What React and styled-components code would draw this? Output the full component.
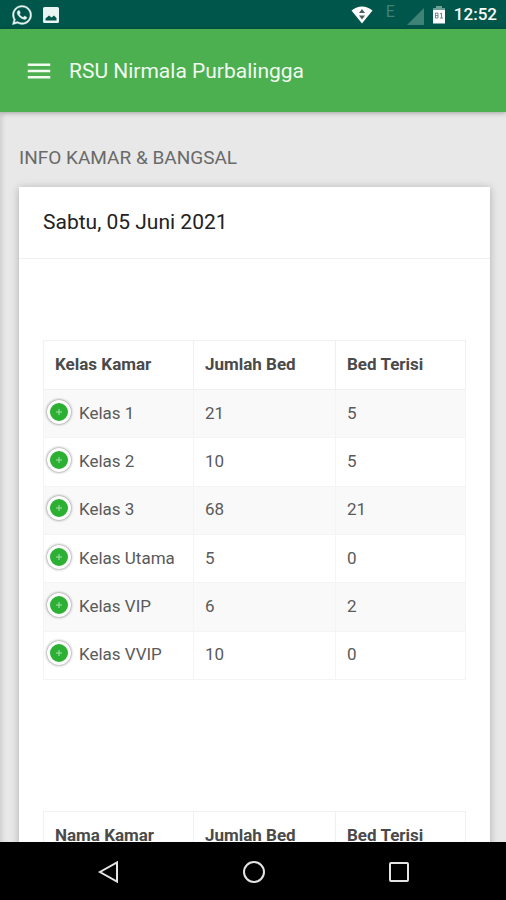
import React from "react";
import styled, { createGlobalStyle } from "styled-components";
import { FaWhatsapp } from "react-icons/fa";
import { MdMenu } from "react-icons/md";

const kelas = [
  { nama: "Kelas 1", jumlah: 21, terisi: 5 },
  { nama: "Kelas 2", jumlah: 10, terisi: 5 },
  { nama: "Kelas 3", jumlah: 68, terisi: 21 },
  { nama: "Kelas Utama", jumlah: 5, terisi: 0 },
  { nama: "Kelas VIP", jumlah: 6, terisi: 2 },
  { nama: "Kelas VVIP", jumlah: 10, terisi: 0 },
];

export default function App() {
  return (
    <Screen>
      <GlobalStyle />
      <StatusBar />
      <AppBar>
        <MenuButton type="button" aria-label="Menu"><MdMenu size={30} /></MenuButton>
        <Brand href="#">RSU Nirmala Purbalingga</Brand>
      </AppBar>
      <Content>
        <BlockTitle>INFO KAMAR &amp; BANGSAL</BlockTitle>
        <Card>
          <CardHeader>Sabtu, 05 Juni 2021</CardHeader>
          <CardBody>
            <BedTable title="Kelas Kamar" rows={kelas} />
            <BedTable title="Nama Kamar" rows={[]} />
          </CardBody>
        </Card>
      </Content>
      <NavBar />
    </Screen>
  );
}

const StatusBar = () => (
  <Status>
    <StatusGroup>
      <FaWhatsapp size={22} stroke="currentColor" strokeWidth={8} />
      <svg width="20" height="20" viewBox="0 0 20 20">
        <path
          fillRule="evenodd"
          d="M3.500 2H16.500Q18 2 18 3.500V16.500Q18 18 16.500 18H3.500Q2 18 2 16.500V3.500Q2 2 3.500 2ZM4.500 15.500H15.500V13L13 10.500L10.500 12.500L8 10.500L4.500 13.500Z"
          fill="currentColor"
        />
      </svg>
    </StatusGroup>
    <StatusGroup>
      <svg width="22" height="18" viewBox="0 0 22 18">
        <path d="M0.5 4.5Q11 -3.5 21.500 4.500L11 17.500Z" fill="#fff" />
        <path d="M8 7L11 3L14 7ZM8 9.500L11 13.500L14 9.500Z" fill="#4b5f5b" />
      </svg>
      <Network>E</Network>
      <Signal width="17" height="17" viewBox="0 0 17 17">
        <path d="M0 17L17 0V17Z" fill="#3f8377" />
      </Signal>
      <svg width="14" height="18" viewBox="0 0 14 18">
        <path d="M4 0H10V2H13V5H1V2H4Z" fill="#6b9f96" />
        <path d="M1 4H13V17.500H1Z" fill="#fff" />
        <path d="M3.500 7H6V12H3.500ZM3.500 9.500H6M8 8L9.500 7V12M8 12H11" fill="none" stroke="#6f8f89" />
      </svg>
      <Clock>12:52</Clock>
    </StatusGroup>
  </Status>
);

const BedTable = ({ title, rows }) => (
  <Table $filled={rows.length > 0}>
    <thead>
      <tr>
        <Th $width="150px">{title}</Th>
        <Th $width="142px">Jumlah Bed</Th>
        <Th>Bed Terisi</Th>
      </tr>
    </thead>
    <tbody>
      {rows.map((row) => (
        <Row key={row.nama}>
          <NameTd>
            <Name>
              <Expand type="button" aria-label={"Detail " + row.nama}>
                <svg width="6" height="6" viewBox="0 0 6 6">
                  <path d="M3 0V6M0 3H6" stroke="#a5e3a8" />
                </svg>
              </Expand>
              {row.nama}
            </Name>
          </NameTd>
          <Td>{row.jumlah}</Td>
          <Td>{row.terisi}</Td>
        </Row>
      ))}
    </tbody>
  </Table>
);

const NavBar = () => (
  <Nav>
    <NavButton type="button" aria-label="Back">
      <svg width="24" height="24" viewBox="0 0 24 24">
        <path d="M20 2.500V21.500L3 12Z" />
      </svg>
    </NavButton>
    <NavButton type="button" aria-label="Home">
      <svg width="24" height="24" viewBox="0 0 24 24">
        <circle cx="12" cy="12" r="10" />
      </svg>
    </NavButton>
    <NavButton type="button" aria-label="Recent">
      <svg width="24" height="24" viewBox="0 0 24 24">
        <rect x="3" y="3" width="18" height="18" rx="1" />
      </svg>
    </NavButton>
  </Nav>
);

const GlobalStyle = createGlobalStyle`
  * {
    box-sizing: border-box;
  }
  body {
    margin: 0;
    font-family: Roboto, "Liberation Sans", sans-serif;
    color: #5a5a5a;
    background: #e8e8e8;
  }
  button {
    padding: 0;
    border: 0;
    background: none;
    color: inherit;
    cursor: pointer;
  }
  svg {
    display: block;
  }
`

const Screen = styled.div`
  display: flex;
  flex-direction: column;
  height: 100vh;
`
const Status = styled.header`
  display: flex;
  flex: none;
  justify-content: space-between;
  align-items: center;
  height: 29px;
  padding: 0 9px 0 11px;
  background: #00564a;
  color: #e8f5f2;
`
const StatusGroup = styled.div`
  display: flex;
  align-items: center;
  gap: 8px;
`
const Network = styled.span`
  margin: 0 0 6px 5px;
  font-size: 16px;
  line-height: 20px;
  color: #3f8377;
`
const Signal = styled.svg`
  margin: 4px 0 0 4px;
`
const Clock = styled.time`
  font-size: 17px;
  font-weight: 500;
  line-height: 29px;
  color: #fff;
`
const AppBar = styled.div`
  display: flex;
  flex: none;
  align-items: center;
  gap: 15px;
  height: 83px;
  padding: 0 24px;
  background: #4caf50;
  color: #f1fbf0;
  box-shadow: 0 1px 5px rgba(0, 0, 0, 0.3);
  z-index: 1;
`
const MenuButton = styled.button`
  flex: none;
`
const Brand = styled.a`
  font-size: 21px;
  line-height: 28px;
  color: inherit;
  text-decoration: none;
`
const Content = styled.main`
  flex: 1;
  min-height: 0;
  overflow-y: auto;
  scrollbar-width: none;
  padding: 34px 16px 0 19px;
  box-shadow: inset 5px 0 5px -3px rgba(0, 0, 0, 0.12);
`
const BlockTitle = styled.h2`
  margin: 0 0 17px;
  font-size: 19px;
  font-weight: 400;
  line-height: 24px;
  color: #6a6a6a;
`
const Card = styled.section`
  background: #fff;
  box-shadow: 0 1px 8px rgba(0, 0, 0, 0.25);
`
const CardHeader = styled.h3`
  margin: 0;
  padding: 21px 24px 22px;
  border-bottom: 1px solid #f0f0f0;
  font-size: 21px;
  font-weight: 400;
  line-height: 28px;
  color: #222;
`
const CardBody = styled.div`
  padding: 81px 24px 0;
`
const Table = styled.table`
  width: 100%;
  height: ${(props) => (props.$filled ? "340px" : "auto")};
  margin-bottom: 131px;
  border: 1px solid #e6e6e6;
  border-collapse: collapse;
  table-layout: fixed;
  font-size: 17px;
  line-height: 24px;
`
const Th = styled.th`
  width: ${(props) => props.$width || "auto"};
  height: 49px;
  padding: 0 11px 2px;
  border: 1px solid #f0f0f0;
  font-weight: 700;
  text-align: left;
  color: #4a4a4a;
`
const Td = styled.td`
  padding: 0 11px 2px;
  border: 1px solid #f4f4f4;
`
const NameTd = styled(Td)`
  padding: 0 3px 2px;
`
const Row = styled.tr`
  &:nth-child(odd) {
    background: #f9f9f9;
  }
`
const Name = styled.div`
  display: flex;
  align-items: center;
  gap: 8px;
  white-space: nowrap;
`
const Expand = styled.button`
  display: grid;
  place-items: center;
  flex: none;
  width: 24px;
  height: 24px;
  margin-bottom: 2px;
  && {
    border: 3px solid #fff;
    background: #2cb034;
  }
  border-radius: 50%;
  box-shadow: 0 0 3px #666;
`
const Nav = styled.nav`
  display: flex;
  flex: none;
  justify-content: center;
  gap: 121px;
  height: 58px;
  padding: 2px 0 0 2px;
  background: #000;
`
const NavButton = styled.button`
  svg {
    fill: none;
    stroke: #e4e4e4;
    stroke-width: 2;
  }
`
